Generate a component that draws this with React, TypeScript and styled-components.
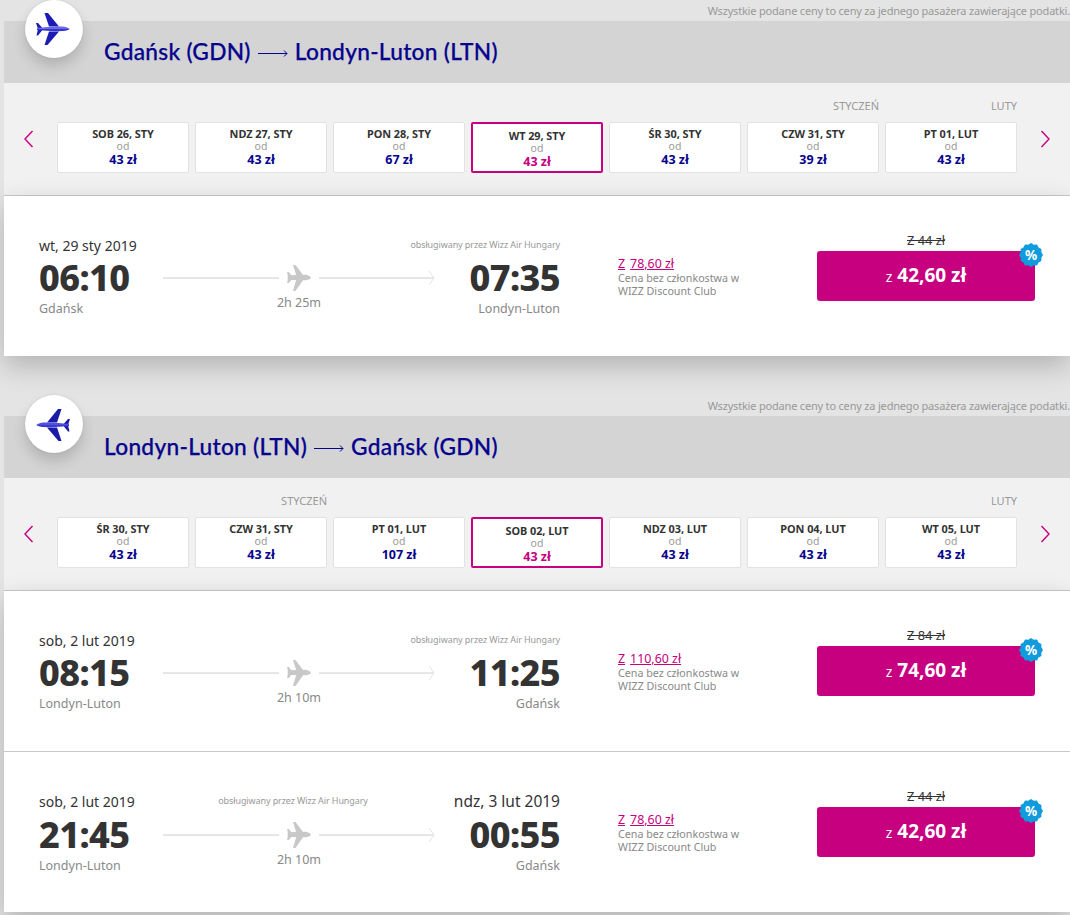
import React from "react";
import styled, { createGlobalStyle } from "styled-components";

const Global = createGlobalStyle`
  html, body { margin: 0; padding: 0; background: #e4e4e4; }
  body { font-family: "Noto Sans", "Open Sans", sans-serif; color: #333; }
`;

const NAVY = "#06038d";
const MAGENTA = "#c6007e";
const BODY = `"Noto Sans", "Open Sans", sans-serif`;

const Page = styled.div`
  width: 1070px;
  height: 915px;
  overflow: hidden;
  padding-left: 4px;
  box-sizing: border-box;
  background: #e4e4e4;
`;
const Section = styled.section`
  position: relative;
  margin-bottom: 39px;
`;
const Note = styled.div`
  height: 21px;
  line-height: 21px;
  text-align: right;
  font-size: 11px;
  letter-spacing: -0.19px;
  color: #999;
  white-space: nowrap;
`;
const Header = styled.header`
  height: 62px;
  background: #d4d4d4;
  display: flex;
  align-items: center;
  padding: 0 0 0 100px;
  gap: 7px;
  box-sizing: border-box;
`;
const Badge = styled.div`
  position: absolute;
  left: 21px;
  top: 0;
  width: 58px;
  height: 58px;
  border-radius: 50%;
  background: #fff;
  box-shadow: 0 8px 14px rgba(0, 0, 0, 0.16), 0 0 2px rgba(0, 0, 0, 0.12);
  display: flex;
  align-items: center;
  justify-content: center;
`;
const Route = styled.span`
  font-family: "Lato", sans-serif;
  font-size: 22.7px;
  font-weight: 500;
  color: ${NAVY};
  letter-spacing: 0.28px;
  -webkit-text-stroke: 0.25px ${NAVY};
  position: relative;
  top: -1px;
  white-space: nowrap;
`;
const Calendar = styled.div`
  height: 113px;
  background: #f1f1f1;
  border-bottom: 1px solid #c8c8c8;
  box-sizing: border-box;
  display: grid;
  grid-template-columns: 53px 960px 53px;
  grid-template-rows: 39px 51px;
`;
const Months = styled.div`
  grid-column: 2;
  display: grid;
  grid-template-columns: repeat(7, 132px);
  column-gap: 6px;
  align-items: end;
  padding-bottom: 10px;
`;
const Month = styled.span<{ $col: number }>`
  grid-column: ${(p) => p.$col};
  text-align: right;
  font-size: 11px;
  line-height: 13px;
  color: #999;
`;
const Arrow = styled.button<{ $right?: boolean }>`
  grid-row: 2;
  border: 0;
  background: none;
  padding: 8px ${(p) => (p.$right ? 0 : 3)}px 0 ${(p) => (p.$right ? 2 : 0)}px;
  display: flex;
  align-items: flex-start;
  justify-content: center;
  height: 51px;
  box-sizing: border-box;
  svg { display: block; }
`;
const Days = styled.div`
  grid-row: 2;
  grid-column: 2;
  display: grid;
  grid-template-columns: repeat(7, 132px);
  column-gap: 6px;
`;
const Day = styled.div<{ $on?: boolean }>`
  height: 51px;
  box-sizing: border-box;
  background: #fff;
  border: ${(p) => (p.$on ? `2px solid ${MAGENTA}` : "1px solid #e2e2e2")};
  border-radius: 2px;
  text-align: center;
  display: flex;
  flex-direction: column;
  align-items: center;
  padding-top: ${(p) => (p.$on ? 5 : 4)}px;
`;
const DayName = styled.span`
  font-size: 10.9px;
  font-weight: 700;
  letter-spacing: -0.05px;
  line-height: 13px;
  color: #333;
  white-space: nowrap;
`;
const Od = styled.span`
  font-size: 10.5px;
  line-height: 12px;
  color: #999;
`;
const DayPrice = styled.span<{ $on?: boolean }>`
  font-size: 12.5px;
  font-weight: 700;
  line-height: 15px;
  color: ${(p) => (p.$on ? MAGENTA : NAVY)};
`;
const Row = styled.div`
  height: 160px;
  box-sizing: border-box;
  background: #fff;
  display: flex;
  align-items: flex-start;
  padding: 40px 0 0 35px;
`;
const RowDivider = styled.div`
  height: 1px;
  background: #c8c8c8;
`;
const Flights = styled.div`
  box-shadow: 0 10px 26px rgba(0, 0, 0, 0.22);
`;
const Info = styled.div<{ $shifted?: boolean }>`
  width: 521px;
  display: grid;
  grid-template-columns: 124px 272px 125px;
  grid-template-rows: ${(p) => (p.$shifted ? 21 : 20)}px 44px 18px;
`;
const DateText = styled.span<{ $arrival?: boolean }>`
  font-size: ${(p) => (p.$arrival ? 15.5 : 14)}px;
  line-height: 20px;
  margin-top: ${(p) => (p.$arrival ? -1 : 0)}px;
  color: #333;
  white-space: nowrap;
  grid-column: ${(p) => (p.$arrival ? 3 : 1)};
  grid-row: 1;
  text-align: ${(p) => (p.$arrival ? "right" : "left")};
`;
const Operator = styled.span<{ $middle?: boolean }>`
  font-size: 9px;
  line-height: 18px;
  letter-spacing: -0.1px;
  color: #999;
  white-space: nowrap;
  grid-row: 1;
  grid-column: ${(p) => (p.$middle ? "2" : "2 / 4")};
  text-align: ${(p) => (p.$middle ? "center" : "right")};
  padding-right: ${(p) => (p.$middle ? 12 : 0)}px;
`;
const Time = styled.span<{ $right?: boolean }>`
  grid-row: 2;
  grid-column: ${(p) => (p.$right ? 3 : 1)};
  align-self: center;
  text-align: ${(p) => (p.$right ? "right" : "left")};
  font-size: 36px;
  font-weight: 800;
  line-height: 36px;
  letter-spacing: -0.6px;
  color: #333;
`;
const City = styled.span<{ $right?: boolean }>`
  grid-row: 3;
  grid-column: ${(p) => (p.$right ? 3 : 1)};
  text-align: ${(p) => (p.$right ? "right" : "left")};
  font-size: 12.5px;
  line-height: 18px;
  color: #888;
  white-space: nowrap;
`;
const Track = styled.div`
  grid-column: 2;
  grid-row: 2;
  display: flex;
  align-items: center;
  height: 44px;
`;
const Line = styled.span`
  height: 1px;
  flex: 1;
  background: #e4e4e4;
  border-top: 1px solid #e8e8e8;
  display: block;
`;
const ArrowHead = styled.svg`
  display: block;
  margin-left: -6px;
`;
const Duration = styled.span`
  grid-column: 2;
  grid-row: 3;
  text-align: center;
  font-size: 12.5px;
  line-height: 13px;
  margin-top: -4px;
  color: #888;
`;
const Member = styled.div`
  width: 199px;
  margin-left: 58px;
  padding-top: 20px;
  box-sizing: border-box;
`;
const MemberPrice = styled.div`
  display: flex;
  gap: 5px;
  font-size: 12.4px;
  line-height: 16px;
  color: ${MAGENTA};
  span { text-decoration: underline; }
`;
const MemberText = styled.div`
  font-size: 10.7px;
  line-height: 12.5px;
  color: #888;
  width: 130px;
`;
const Fare = styled.div`
  width: 218px;
  margin-top: -3px;
`;
const OldPrice = styled.div`
  text-align: center;
  font-size: 12.8px;
  line-height: 15px;
  margin-bottom: 3px;
  color: #333;
  text-decoration: line-through;
`;
const Buy = styled.button`
  position: relative;
  display: flex;
  align-items: baseline;
  justify-content: center;
  gap: 5px;
  width: 218px;
  height: 50px;
  border: 0;
  border-radius: 3px;
  background: ${MAGENTA};
  color: #fff;
  padding: 11px 0 0;
  box-sizing: border-box;
  font-family: ${BODY};
`;
const BuyZ = styled.span`
  font-size: 14px;
`;
const BuyAmount = styled.span`
  font-size: 19px;
  font-weight: 700;
`;
const Sale = styled.span`
  position: absolute;
  right: -8px;
  top: -8px;
  width: 24px;
  height: 24px;
  display: flex;
  align-items: center;
  justify-content: center;
  font-size: 13.5px;
  font-weight: 700;
  color: #fff;
  svg { position: absolute; inset: 0; }
  b { position: relative; font-weight: 700; }
`;

const BigPlane = ({ flip, a, b, c }: { flip?: boolean; a: string; b: string; c: string }) => (
  <svg width="34" height="33" viewBox="0 0 34 33" style={{ transform: flip ? "translate(-1px,1px) scaleX(-1)" : "translate(-1px,0)" }}>
    <path d="M8.5 0 12 0 23 13.5 13 13.5Z" fill={a} />
    <path d="M13 18.5 23 18.5 11.5 32 8.5 32Z" fill={a} />
    <path d="M0 10 2 10 6 14.5 6 17.5 2 22.5 0.5 22.5 2 16Z" fill={a} />
    <path d="M1 15 Q14 13 27 13.5 Q33 14.5 33.5 16 L1 16Z" fill={b} />
    <path d="M1 16 L33.5 16 Q32 17.5 27 18 Q14 18.5 1 17Z" fill={c} />
  </svg>
);

const GreyPlane = () => (
  <svg width="24" height="26" viewBox="0 0 34 33" preserveAspectRatio="none" style={{ margin: "0 8px", flex: "none", display: "block" }}>
    <path d="M8.5 0 12 0 23 13 13 13Z" fill="#c8c8c8" />
    <path d="M13 19 23 19 12 33 8.5 33Z" fill="#c8c8c8" />
    <path d="M0 9 2.5 9 7 14 7 18 2.5 23 0 23 2 16Z" fill="#c8c8c8" />
    <path d="M1 13 L27 12.5 Q33 14 34 16 Q33 18.5 27 19.5 L1 19Z" fill="#c8c8c8" />
  </svg>
);

const LongArrow = () => (
  <svg width="30" height="9" viewBox="0 0 30 9" style={{ display: "block", position: "relative", top: "1px" }}>
    <path d="M0 4.5H29M26 1.5l3 3-3 3" fill="none" stroke={NAVY} strokeWidth="1" />
  </svg>
);

const Chevron = ({ right }: { right?: boolean }) => (
  <svg width="10" height="18" viewBox="0 0 10 18">
    <path d={right ? "M1.5 1l7.5 8-7.5 8" : "M8.5 1L1 9l7.5 8"} fill="none" stroke={MAGENTA} strokeWidth="1.4" />
  </svg>
);

const scallop = (() => {
  const pts: string[] = [];
  for (let i = 0; i < 24; i++) {
    const r = i % 2 ? 10.7 : 12;
    const t = (i / 24) * Math.PI * 2;
    pts.push(`${(12 + r * Math.cos(t)).toFixed(2)},${(12 + r * Math.sin(t)).toFixed(2)}`);
  }
  return pts.join(" ");
})();

type D = { name: string; price: string; on?: boolean };
type F = {
  date: string; endDate?: string; dep: string; arr: string; from: string; to: string; dur: string;
  member: string; old: string; price: string;
};
type S = { from: string; to: string; flip?: boolean; months: { label: string; col: number }[]; days: D[]; flights: F[] };

const sections: S[] = [
  {
    from: "Gdańsk (GDN)", to: "Londyn-Luton (LTN)",
    months: [{ label: "STYCZEŃ", col: 6 }, { label: "LUTY", col: 7 }],
    days: [
      { name: "SOB 26, STY", price: "43 zł" }, { name: "NDZ 27, STY", price: "43 zł" }, { name: "PON 28, STY", price: "67 zł" },
      { name: "WT 29, STY", price: "43 zł", on: true }, { name: "ŚR 30, STY", price: "43 zł" }, { name: "CZW 31, STY", price: "39 zł" }, { name: "PT 01, LUT", price: "43 zł" },
    ],
    flights: [{ date: "wt, 29 sty 2019", dep: "06:10", arr: "07:35", from: "Gdańsk", to: "Londyn-Luton", dur: "2h 25m", member: "78,60 zł", old: "Z 44 zł", price: "42,60 zł" }],
  },
  {
    from: "Londyn-Luton (LTN)", to: "Gdańsk (GDN)", flip: true,
    months: [{ label: "STYCZEŃ", col: 2 }, { label: "LUTY", col: 7 }],
    days: [
      { name: "ŚR 30, STY", price: "43 zł" }, { name: "CZW 31, STY", price: "43 zł" }, { name: "PT 01, LUT", price: "107 zł" },
      { name: "SOB 02, LUT", price: "43 zł", on: true }, { name: "NDZ 03, LUT", price: "43 zł" }, { name: "PON 04, LUT", price: "43 zł" }, { name: "WT 05, LUT", price: "43 zł" },
    ],
    flights: [
      { date: "sob, 2 lut 2019", dep: "08:15", arr: "11:25", from: "Londyn-Luton", to: "Gdańsk", dur: "2h 10m", member: "110,60 zł", old: "Z 84 zł", price: "74,60 zł" },
      { date: "sob, 2 lut 2019", endDate: "ndz, 3 lut 2019", dep: "21:45", arr: "00:55", from: "Londyn-Luton", to: "Gdańsk", dur: "2h 10m", member: "78,60 zł", old: "Z 44 zł", price: "42,60 zł" },
    ],
  },
];

const OPERATOR = "obsługiwany przez Wizz Air Hungary";

export default function App() {
  return (
    <Page>
      <Global />
      {sections.map((s) => (
        <Section key={s.from}>
          <Note>Wszystkie podane ceny to ceny za jednego pasażera zawierające podatki.</Note>
          <Badge>
            {s.flip
              ? <BigPlane flip a="#1b1ba6" b="#5050dc" c="#3a3ad0" />
              : <BigPlane a="#1c1cb4" b="#6a6ae8" c="#3434c8" />}
          </Badge>
          <Header>
            <Route>{s.from}</Route>
            <LongArrow />
            <Route>{s.to}</Route>
          </Header>
          <Calendar>
            <Months>
              {s.months.map((m) => <Month key={m.label} $col={m.col}>{m.label}</Month>)}
            </Months>
            <Arrow><Chevron /></Arrow>
            <Days>
              {s.days.map((d) => (
                <Day key={d.name} $on={d.on}>
                  <DayName>{d.name}</DayName>
                  <Od>od</Od>
                  <DayPrice $on={d.on}>{d.price}</DayPrice>
                </Day>
              ))}
            </Days>
            <Arrow $right><Chevron right /></Arrow>
          </Calendar>
          <Flights>
            {s.flights.map((f, i) => (
              <React.Fragment key={f.dep}>
                {i > 0 && <RowDivider />}
                <Row>
                  <Info $shifted={!!f.endDate}>
                    <DateText>{f.date}</DateText>
                    {f.endDate
                      ? <><Operator $middle>{OPERATOR}</Operator><DateText $arrival>{f.endDate}</DateText></>
                      : <Operator>{OPERATOR}</Operator>}
                    <Time>{f.dep}</Time>
                    <Track>
                      <Line />
                      <GreyPlane />
                      <Line />
                      <ArrowHead width="7" height="16" viewBox="0 0 7 16"><path d="M1 1l5 7-5 7" fill="none" stroke="#e4e4e4" strokeWidth="1" /></ArrowHead>
                    </Track>
                    <Time $right>{f.arr}</Time>
                    <City>{f.from}</City>
                    <Duration>{f.dur}</Duration>
                    <City $right>{f.to}</City>
                  </Info>
                  <Member>
                    <MemberPrice><span>Z</span><span>{f.member}</span></MemberPrice>
                    <MemberText>Cena bez członkostwa w WIZZ Discount Club</MemberText>
                  </Member>
                  <Fare>
                    <OldPrice>{f.old}</OldPrice>
                    <Buy>
                      <BuyZ>z</BuyZ>
                      <BuyAmount>{f.price}</BuyAmount>
                      <Sale>
                        <svg width="24" height="24" viewBox="0 0 24 24"><polygon points={scallop} fill="#0f9bdc" /></svg>
                        <b>%</b>
                      </Sale>
                    </Buy>
                  </Fare>
                </Row>
              </React.Fragment>
            ))}
          </Flights>
        </Section>
      ))}
    </Page>
  );
}
